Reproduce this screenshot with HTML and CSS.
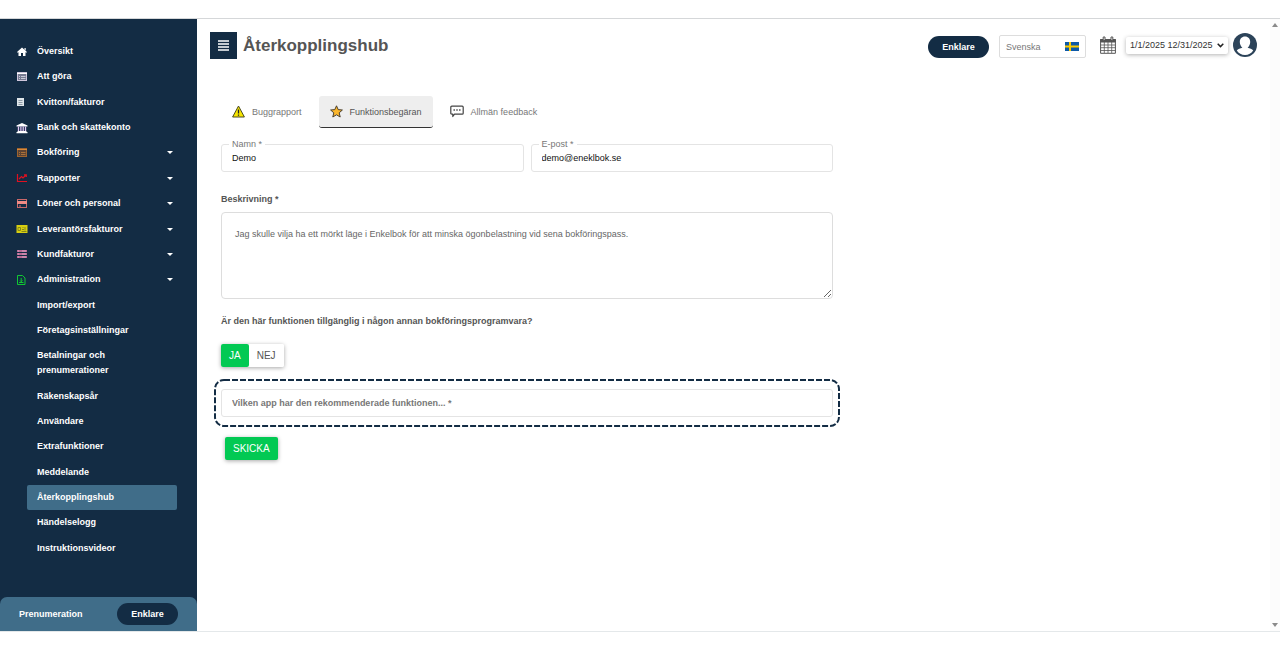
FILE: index.html
```html
<!DOCTYPE html>
<html lang="sv">
<head>
    <meta charset="UTF-8">
    <meta name="viewport" content="width=device-width, initial-scale=1.0">
    <title>Återkopplingshub</title>
    <link rel="stylesheet" href="styles.css">
</head>
<body>

<div class="app">
    <aside class="sidebar">
        <nav class="menu">
            <a class="menu-item" href="#">
                <svg class="icon" viewBox="0 0 12 12"><path fill="#fff" d="M6 1.5 11 6l-.7.8-.8-.6V10H7V7H5v3H2.5V6.2l-.8.6L1 6zM8.500 2H9.700v2.500l-1.200-1z"/></svg>
                <span>Översikt</span>
            </a>
            <a class="menu-item" href="#">
                <svg class="icon" viewBox="0 0 12 12"><rect x="1.500" y="1.500" width="9" height="8" fill="#777b92" stroke="#cfc6dc"/><path stroke="#fff" d="M1 2.500h10"/><path stroke="#c8cbd8" d="M3 5.500h1M5 5.500h4.500M3 7.500h1M5 7.500h4.500"/></svg>
                <span>Att göra</span>
            </a>
            <a class="menu-item" href="#">
                <svg class="icon" viewBox="0 0 12 12"><path fill="#dfe6ea" d="M1 2h7v8H1z"/><path stroke="#8d9aa6" d="M2.500 4.500h4M2.500 6.500h4M2.500 8.500h4"/></svg>
                <span>Kvitton/fakturor</span>
            </a>
            <a class="menu-item" href="#">
                <svg class="icon" viewBox="0 0 12 12"><path fill="#fff" d="M6 1l5.500 2.500v1H.5v-1zM.5 10h11v1.200H.5zM1.500 9h9v1h-9z"/><path stroke="#e3c4f5" stroke-width="1.300" d="M2.500 4.500V9M4.900 4.500V9M7.200 4.500V9M9.500 4.500V9"/></svg>
                <span>Bank och skattekonto</span>
            </a>
            <a class="menu-item" href="#">
                <svg class="icon" viewBox="0 0 12 12"><rect x="1.500" y="1.500" width="9" height="8" fill="#5e4433" stroke="#9c632f"/><path stroke="#d98a3a" d="M1 2.500h10"/><path stroke="#a8713a" d="M3 5.500h1M5 5.500h4.500M3 7.500h1M5 7.500h4.500"/></svg>
                <span>Bokföring</span>
                <span class="caret"></span>
            </a>
            <a class="menu-item" href="#">
                <svg class="icon" viewBox="0 0 12 12" fill="none" stroke="#e01020"><path d="M1.500 2v7.500H11" stroke-width="1.200"/><path d="M3 7l2.500-2.500L7 6l3-3M8 2.800h2.300V5" stroke-width="1.200"/></svg>
                <span>Rapporter</span>
                <span class="caret"></span>
            </a>
            <a class="menu-item" href="#">
                <svg class="icon" viewBox="0 0 12 12"><rect x="1.500" y="1.500" width="9" height="8" fill="none" stroke="#c9686a"/><path fill="#f08a84" d="M1 3h10v3H1z"/><path stroke="#d9706e" d="M3 8h2"/></svg>
                <span>Löner och personal</span>
                <span class="caret"></span>
            </a>
            <a class="menu-item" href="#">
                <svg class="icon" viewBox="0 0 12 12"><path fill="#d8cf10" d="M.5 2h11v8H.5z"/><path fill="none" stroke="#85871a" d="M2 4.500h2.500v3H2zM6.500 4.500h1M9 4v3.500M6 6.500h2M5.500 8.500h5"/></svg>
                <span>Leverantörsfakturor</span>
                <span class="caret"></span>
            </a>
            <a class="menu-item" href="#">
                <svg class="icon" viewBox="0 0 12 12"><path stroke="#b96a94" stroke-width="2" d="M1 3h10M1 6h10M1 9h10"/><path stroke="#dba0c0" d="M2 3h1M2 6h1M2 9h1M6 3h4M6 6h4M6 9h4"/></svg>
                <span>Kundfakturor</span>
                <span class="caret"></span>
            </a>
            <a class="menu-item" href="#">
                <svg class="icon" viewBox="0 0 12 12" fill="none" stroke="#10c832"><path d="M1.500 1.500h5L9 4v6.500H1.500z"/><path d="M3 8.500h4.500M5.200 4v3.500M4 6.500l1.200 1.200 1.300-1.200"/></svg>
                <span>Administration</span>
                <span class="caret"></span>
            </a>
            <a class="sub-item" href="#">Import/export</a>
            <a class="sub-item" href="#">Företagsinställningar</a>
            <a class="sub-item" href="#">Betalningar och<br>prenumerationer</a>
            <a class="sub-item" href="#">Räkenskapsår</a>
            <a class="sub-item" href="#">Användare</a>
            <a class="sub-item" href="#">Extrafunktioner</a>
            <a class="sub-item" href="#">Meddelande</a>
            <a class="sub-item active" href="#">Återkopplingshub</a>
            <a class="sub-item" href="#">Händelselogg</a>
            <a class="sub-item" href="#">Instruktionsvideor</a>
        </nav>
        <div class="plan">
            <span>Prenumeration</span>
            <button class="pill" type="button">Enklare</button>
        </div>
    </aside>

    <main class="content">
        <header class="topbar">
            <button class="toggle" type="button" aria-label="Meny">
                <svg width="13" height="13" viewBox="0 0 13 13"><path stroke="#fff" stroke-width="1.300" d="M1 2h11M1 5h11M1 8h11M1 11h11"/></svg>
            </button>
            <h1>Återkopplingshub</h1>
            <div class="tools">
                <button class="pill" type="button">Enklare</button>
                <div class="language">
                    <select aria-label="Språk">
                        <option>Svenska</option>
                    </select>
                    <svg width="14" height="9" viewBox="0 0 14 9"><path fill="#0d5aa7" d="M0 0h14v9H0z"/><path fill="#fecc00" d="M4 0h2v9H4zM0 3.500h14v2H0z"/></svg>
                </div>
                <svg class="calendar" width="16" height="18" viewBox="0 0 16 18" fill="none" stroke="#555"><path d="M.6 3.500h14.800v13.800H.6z"/><path fill="#555" d="M.6 3.500h14.800v2.500H.6z"/><path stroke-width=".8" d="M.6 9h14.800M.6 11.700h14.800M.6 14.500h14.800M4.300 6v11M8 6v11M11.700 6v11"/><path fill="#fff" d="M3.200 1h1.800v3.500H3.200zM11 1h1.800v3.500H11z"/></svg>
                <div class="period">
                    <select aria-label="Period">
                        <option>1/1/2025 12/31/2025</option>
                    </select>
                    <svg width="7" height="5" viewBox="0 0 7 5"><path fill="none" stroke="#222" stroke-width="1.500" d="M.7.8l2.800 2.800L6.300.8"/></svg>
                </div>
                <svg class="avatar" width="24" height="24" viewBox="0 0 24 24"><circle cx="12" cy="12" r="12" fill="#2c4359"/><path fill="#fff" d="M12 3.500c3.200 0 5.200 2.300 5.200 5.500 0 2.400-1.200 4.600-2.600 5.700 2.200.6 4.500 1.300 5.600 2.800A9.900 9.900 0 0 1 12 22a9.900 9.900 0 0 1-8.200-4.500c1.100-1.500 3.400-2.200 5.600-2.800C8 13.600 6.800 11.400 6.800 9c0-3.200 2-5.500 5.200-5.500z"/></svg>
            </div>
        </header>

        <form class="feedback">
            <div class="tabs">
                <button class="tab" type="button">
                    <svg width="13" height="13" viewBox="0 0 13 13"><path fill="#f7e600" stroke="#4a4a20" stroke-linejoin="round" d="M6.500 1 12.400 12H.6z"/><path stroke="#222" stroke-width="1.300" d="M6.500 4.500v4M6.500 9.500v1.300"/></svg>
                    Buggrapport
                </button>
                <button class="tab selected" type="button">
                    <svg width="13" height="13" viewBox="0 0 13 13"><path fill="#fbb62c" stroke="#4a4030" stroke-linejoin="round" d="m6.500.8 1.700 3.800 4.200.4-3.200 2.800 1 4.200-3.700-2.200L2.800 12l1-4.200L.6 5l4.200-.4z"/></svg>
                    Funktionsbegäran
                </button>
                <button class="tab" type="button">
                    <svg width="14" height="13" viewBox="0 0 14 13"><path fill="none" stroke="#444" stroke-width="1.200" stroke-linejoin="round" d="M1.800 1.200h10.400q1 0 1 1v6q0 1-1 1H4.500L2.800 11.500V9.200h-1q-1 0-1-1v-6q0-1 1-1z"/><path stroke="#444" stroke-width="1.300" d="M3.500 5h1.400M6.300 5h1.400M9.100 5h1.400"/></svg>
                    Allmän feedback
                </button>
            </div>

            <div class="contact">
                <div class="field">
                    <label for="name">Namn *</label>
                    <input type="text" id="name" value="Demo">
                </div>
                <div class="field">
                    <label for="email">E-post *</label>
                    <input type="text" id="email" value="demo@eneklbok.se">
                </div>
            </div>

            <label class="heading" for="description">Beskrivning *</label>
            <textarea id="description">Jag skulle vilja ha ett mörkt läge i Enkelbok för att minska ögonbelastning vid sena bokföringspass.</textarea>

            <p class="heading">Är den här funktionen tillgänglig i någon annan bokföringsprogramvara?</p>
            <div class="switch">
                <button class="yes" type="button">JA</button>
                <button class="no" type="button">NEJ</button>
            </div>

            <div class="highlight">
                <svg class="dashes"><rect x="1" y="1" rx="9"/></svg>
                <input type="text" aria-label="Vilken app" placeholder="Vilken app har den rekommenderade funktionen... *">
            </div>

            <button class="send" type="button">SKICKA</button>
        </form>
    </main>

    <div class="scroll">
        <svg width="6" height="4" viewBox="0 0 6 4"><path fill="#8a8a8a" d="M3 0l3 4H0z"/></svg>
        <svg width="6" height="4" viewBox="0 0 6 4"><path fill="#8a8a8a" d="M0 0h6L3 4z"/></svg>
    </div>
</div>

</body>
</html>
```
FILE: styles.css
```css
* {
    box-sizing: border-box;
}

body {
    margin: 0;
    padding: 18px 0;
    min-height: 100vh;
    display: flex;
    font-family: "Liberation Sans", Arial, sans-serif;
    font-size: 9px;
    color: #555;
    background: #fff;
}

button, input, select, textarea {
    font: inherit;
    color: inherit;
}

button {
    border: none;
    cursor: pointer;
}

svg {
    display: block;
    flex: none;
}

.app {
    flex: 1;
    display: flex;
    border-top: 1px solid #d5d7d9;
    border-bottom: 1px solid #e4e8ea;
}

/* sidebar */
.sidebar {
    width: 197px;
    flex: none;
    display: flex;
    flex-direction: column;
    background: #132c44;
    color: #fff;
    font-weight: bold;
}

.menu {
    flex: 1;
    display: flex;
    flex-direction: column;
    justify-content: space-between;
    padding: 20px 20px 36px 16px;
}

.menu a {
    color: #fff;
    text-decoration: none;
    line-height: 15px;
    padding: 5px 0;
}

.menu .menu-item {
    display: flex;
    align-items: center;
    gap: 9px;
}

.icon {
    width: 12px;
    height: 12px;
}

.caret {
    margin-left: auto;
    margin-right: 4px;
    border: 3px solid transparent;
    border-top-color: #fff;
    border-bottom: none;
}

.menu .sub-item {
    margin-left: 11px;
    padding-left: 10px;
    border-radius: 2px;
}

.sub-item.active {
    background: #406d89;
}

.plan {
    display: flex;
    align-items: center;
    justify-content: space-between;
    padding: 6px 19px;
    background: #406d89;
    border-radius: 7px 7px 0 0;
}

.pill {
    width: 61px;
    height: 22px;
    padding: 0;
    border-radius: 11px;
    background: #132c44;
    color: #fff;
    font-weight: bold;
}

/* header */
.content {
    flex: 1;
    min-width: 0;
    padding: 13px;
}

.topbar {
    display: flex;
    align-items: flex-start;
    gap: 6px;
}

.toggle {
    width: 27px;
    height: 27px;
    padding: 7px;
    background: #132c44;
}

h1 {
    margin: 0;
    font-size: 17px;
    line-height: 27px;
}

.tools {
    margin-left: auto;
    display: flex;
    align-items: center;
    gap: 10px;
}

.tools .pill,
.language {
    margin-top: 3px;
}

.language {
    width: 87px;
    height: 23px;
    padding: 0 6px;
    display: flex;
    align-items: center;
    justify-content: space-between;
    border: 1px solid #ddd;
    border-radius: 2px;
}

.tools select {
    appearance: none;
    border: none;
    padding: 0;
    background: none;
}

.language select {
    color: #777;
}

.calendar {
    margin-left: 4px;
}

.period {
    width: 102px;
    height: 17px;
    padding: 0 4px;
    display: flex;
    align-items: center;
    justify-content: space-between;
    border-radius: 2px;
    background: #fff;
    color: #333;
    box-shadow: 0 1px 4px rgba(0, 0, 0, 0.3);
}

.avatar {
    margin-left: -5px;
}

/* form */
.feedback {
    max-width: 623px;
    padding: 37px 0 0 11px;
}

.tabs {
    display: flex;
    gap: 6px;
}

.tab {
    height: 32px;
    padding: 0 11px;
    display: flex;
    align-items: center;
    gap: 7px;
    background: none;
    color: #777;
    border-bottom: 1px solid transparent;
    border-radius: 3px;
}

.tab.selected {
    background: #eee;
    color: #555;
    border-bottom-color: #333;
}

.contact {
    display: grid;
    grid-template-columns: 1fr 1fr;
    gap: 7px;
    margin-top: 16px;
}

.field {
    position: relative;
}

.field label {
    position: absolute;
    left: 8px;
    top: -5px;
    padding: 0 3px;
    line-height: 10px;
    background: #fff;
    color: #777;
}

.feedback input {
    display: block;
    width: 100%;
    height: 28px;
    padding: 0 10px;
    border: 1px solid #e4e4e4;
    border-radius: 3px;
    background: #fff;
    color: #111;
}

.heading {
    display: block;
    margin: 22px 0 7px;
    line-height: 11px;
    font-weight: bold;
}

textarea {
    display: block;
    width: 100%;
    height: 87px;
    padding: 15px 13px;
    border: 1px solid #ddd;
    border-radius: 4px;
    line-height: 13px;
    color: #666;
}

p.heading {
    margin: 17px 0;
}

.switch {
    display: inline-flex;
    border-radius: 2px;
    box-shadow: 0 1px 4px rgba(0, 0, 0, 0.35);
}

.switch button,
.send {
    height: 23px;
    padding: 0 8px;
    font-size: 10px;
}

.switch .yes,
.send {
    background: #02c953;
    color: #fff;
    border-radius: 2px;
}

.switch .no {
    background: #fff;
    border-radius: 2px;
}

.highlight {
    position: relative;
    margin: 12px -7px 10px;
    padding: 10px 7px;
}

.dashes {
    position: absolute;
    inset: 0;
    width: 100%;
    height: 100%;
    pointer-events: none;
}

.dashes rect {
    width: calc(100% - 2px);
    height: calc(100% - 2px);
    fill: none;
    stroke: #132c44;
    stroke-width: 2;
    stroke-dasharray: 6 2;
}

.highlight input::placeholder {
    color: #777;
    font-weight: bold;
}

.send {
    margin-left: 4px;
    box-shadow: 0 1px 4px rgba(0, 0, 0, 0.35);
}

/* scroll track */
.scroll {
    width: 10px;
    flex: none;
    display: flex;
    flex-direction: column;
    align-items: center;
    justify-content: space-between;
    padding: 4px 0;
    background: #fcfcfc;
}
```
